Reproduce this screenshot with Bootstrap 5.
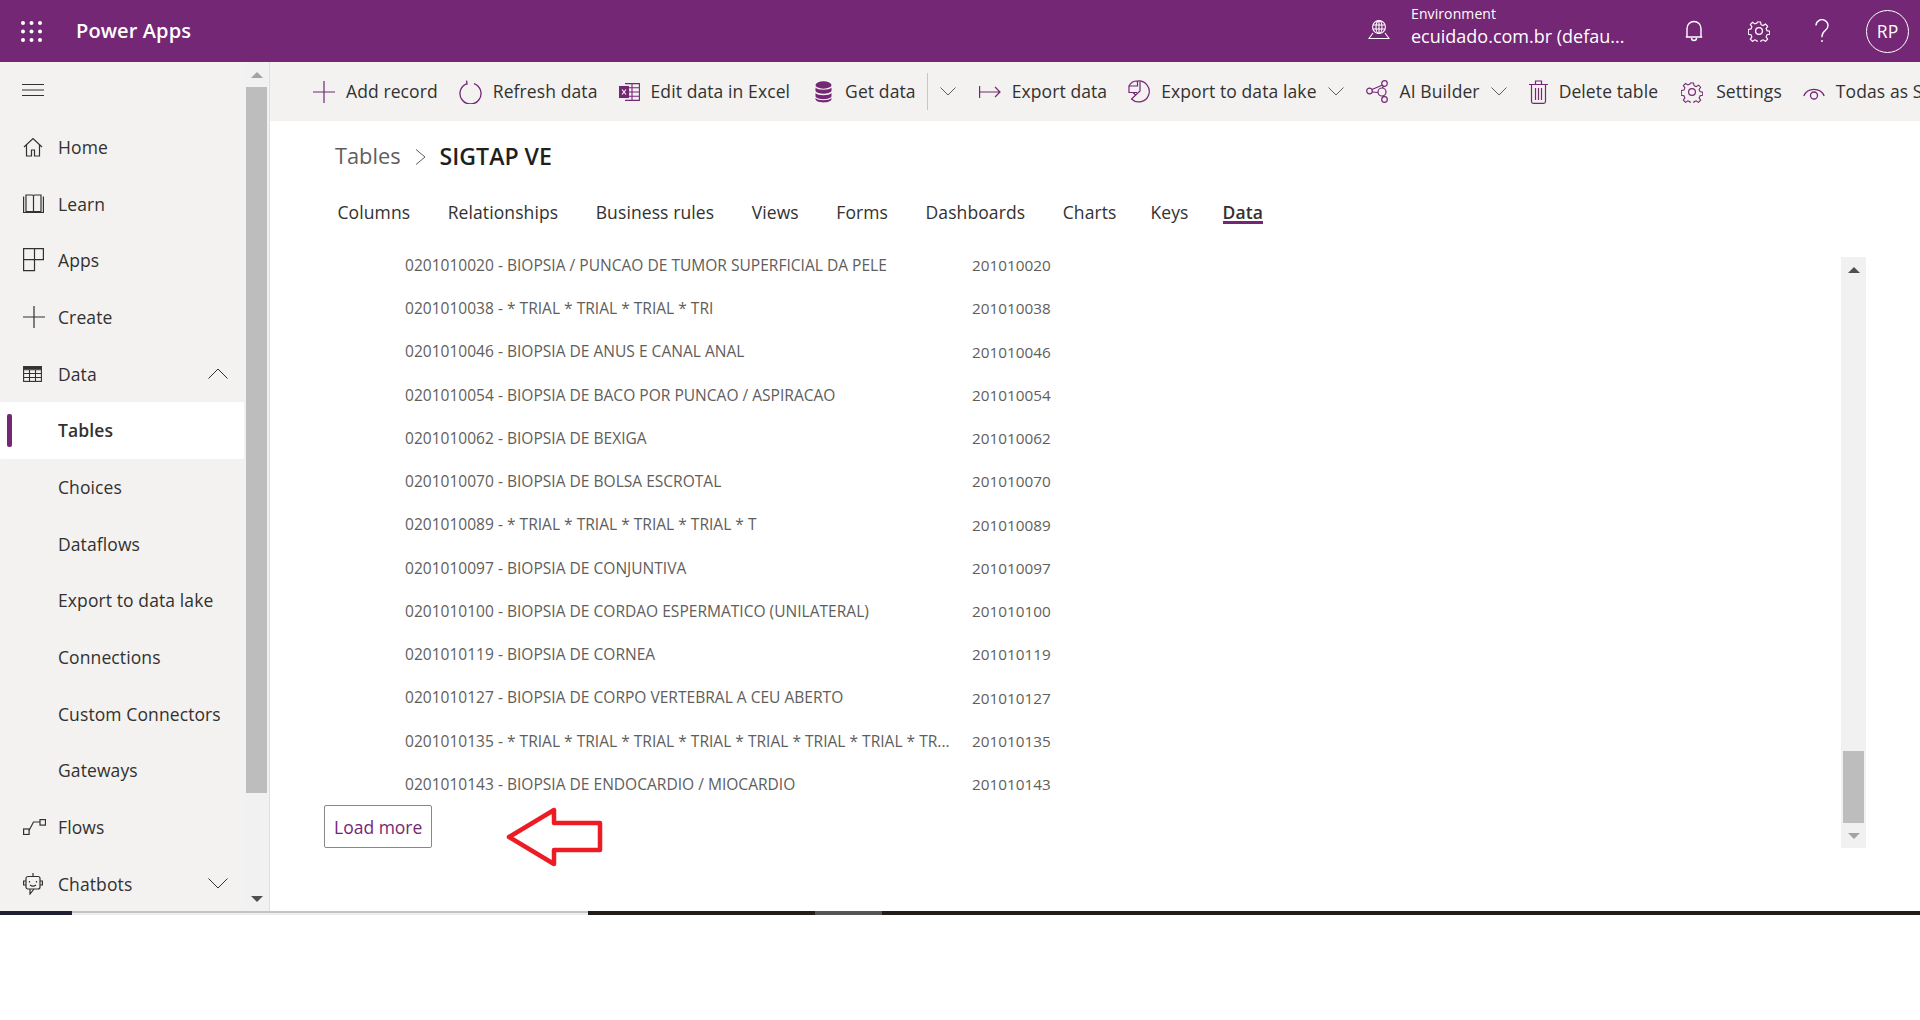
<!DOCTYPE html>
<html lang="en">
<head>
    <meta charset="UTF-8">
    <meta name="viewport" content="width=device-width, initial-scale=1.0">
    <title>Power Apps</title>
    <link href="https://cdn.jsdelivr.net/npm/bootstrap@5.3.0/dist/css/bootstrap.min.css" rel="stylesheet">
    <style>
        body {
            background: #fff;
            font-family: "Open Sans", "Noto Sans", sans-serif;
            font-size: 17.5px;
            letter-spacing: 0.1px;
            color: #323130;
            overflow: hidden;
        }
        svg { display: block; flex: none; fill: none; }
        .app-frame { height: 1020px; position: relative; overflow: hidden; }

        .top-bar { height: 62px; background: #742774; color: #fff; }
        .waffle { margin-left: 21px; }
        .brand { margin-left: 34px; font-size: 20px; font-weight: 600; }
        .env-icon { margin-left: auto; margin-bottom: 2px; }
        .env-text { margin-left: 21px; width: 271.5px; line-height: 1; margin-bottom: 10px; }
        .env-label { font-size: 14px; margin-bottom: 6px; }
        .env-name { font-size: 18px; letter-spacing: 0; }
        .top-btn { width: 22px; margin-right: 41px; }
        .bell-btn { margin-right: 43.5px; }
        .avatar { width: 43px; height: 43px; border: 1px solid #fff; border-radius: 50%; font-size: 17.5px; letter-spacing: 0; margin-right: 11px; margin-left: -8px; }

        .work-area { height: 849px; }
        .side-col { width: 270px; background: #f3f2f1; border-right: 1px solid #e1dfdd; overflow: hidden; }
        .side-nav { width: 246px; }
        .side-link { flex: none; height: 56.7px; padding-left: 22px; color: #323130; text-decoration: none; position: relative; white-space: nowrap; }
        .side-ico { width: 36px; }
        .side-ico svg { margin-left: 1px; }
        .side-sub { padding-left: 58px; }
        .side-sel { width: 244px; background: #fff; font-weight: 600; border-radius: 2px; }
        .side-sel::before { content: ""; position: absolute; left: 7px; top: 12px; height: 33px; width: 5px; border-radius: 2px; background: #742774; }
        .side-caret { margin-left: auto; margin-right: 18px; }

        .sb-track { width: 22px; background: #f1f1f1; }
        .sb-tri { height: 25px; }
        .tri-up, .tri-down { width: 0; height: 0; border-left: 6px solid transparent; border-right: 6px solid transparent; }
        .tri-up { border-bottom: 6px solid #a3a3a3; }
        .tri-down { border-top: 6px solid #505050; }
        .sb-thumb { background: #bdbdbd; }
        .thumb-side { height: 706px; margin-right: 1px; margin-bottom: auto; }
        .thumb-data { height: 72px; margin: auto 2px 0; }

        .cmd-bar { height: 59px; background: #f3f2f1; white-space: nowrap; overflow: hidden; padding-left: 43px; }
        .cmd-item { flex: none; gap: 11px; margin-right: 21px; }
        .cmd-item.gap-wide { gap: 13px; }
        .cmd-item.space-wide { margin-right: 23px; }
        .cmd-item.space-wider { margin-right: 25px; }
        .cmd-chev { margin-left: -10px; margin-right: 22px; }
        .cmd-split { margin-right: 23px; margin-left: 0; }
        .cmd-sep { flex: none; width: 1px; height: 37px; background: #c8c6c4; margin-left: -10px; margin-right: 12px; }

        .crumbs { height: 71px; padding-left: 65px; letter-spacing: 0; }
        .crumb-root { color: #605e5c; font-size: 21.8px; }
        .crumb-sep { margin: 0 14px; }
        .crumb-leaf { font-weight: 600; color: #201f1e; font-size: 23.1px; }
        .tab-strip { height: 41px; padding-left: 67.5px; gap: 37.5px; }
        .tab-item { position: relative; color: #323130; text-decoration: none; }
        .tab-tight { margin-left: -3.5px; }
        .tab-on { font-weight: 600; }
        .tab-on::after { content: ""; position: absolute; left: 0; right: 0; top: 22px; height: 3px; background: #742774; }

        .data-wrap { margin-top: 11px; }
        .data-main { width: 1571px; }
        .data-row { height: 43.25px; padding-left: 135px; font-size: 15.55px; letter-spacing: 0; color: #605e5c; }
        .data-name { flex: none; width: 560px; margin-right: 7px; white-space: nowrap; }
        .data-code { font-size: 15.3px; }
        .load-btn { display: block; margin: -1px 0 0 54px; height: 43px; padding: 0 9px; background: #fff; border: 1px solid #8a8886; border-radius: 2px; color: #742774; }
        .data-scroll { width: 25px; height: 591px; margin-top: 13px; }
        .data-scroll .tri-up { border-bottom-color: #505050; }
        .data-scroll .tri-down { border-top-color: #a3a3a3; }

        .strip { height: 4px; }
        .seg-navy { width: 72px; background: #1f2033; }
        .seg-grey { width: 516px; background: linear-gradient(#c4c4c4 50%, #efefef 50%); }
        .seg-dark { width: 227px; background: #221d18; }
        .seg-mid { width: 67px; background: #555; }
        .seg-rest { flex: 1 1 auto; background: #221d18; }

        .red-arrow { position: absolute; left: 504px; top: 805px; }
    </style>
</head>
<body>
<div class="app-frame">
    <header class="top-bar d-flex align-items-center">
        <svg class="waffle" width="21" height="21" viewBox="0 0 21 21">
            <g fill="#fff"><circle cx="2" cy="2" r="2"/><circle cx="10.5" cy="2" r="2"/><circle cx="19" cy="2" r="2"/><circle cx="2" cy="10.5" r="2"/><circle cx="10.5" cy="10.5" r="2"/><circle cx="19" cy="10.5" r="2"/><circle cx="2" cy="19" r="2"/><circle cx="10.5" cy="19" r="2"/><circle cx="19" cy="19" r="2"/></g>
        </svg>
        <div class="brand">Power Apps</div>
        <svg class="env-icon" width="22" height="20" viewBox="0 0 22 20" stroke="#fff" stroke-width="1.1">
            <circle cx="11" cy="7" r="6.4"/><ellipse cx="11" cy="7" rx="3" ry="6.4"/><path d="M4.8 5h12.4M4.8 9h12.4M11 .6v12.8M5 13l-4 5.5h20l-4-5.5"/>
        </svg>
        <div class="env-text">
            <div class="env-label">Environment</div>
            <div class="env-name">ecuidado.com.br (defau...</div>
        </div>
        <svg class="top-btn bell-btn" width="22" height="22" viewBox="0 0 22 22" stroke="#fff" stroke-width="1.4">
            <path d="M4 17V8.5a7 7 0 0 1 14 0V17zM2.8 17h16.400M8.500 18a2.500 2.500 0 0 0 5 0"/>
        </svg>
        <svg class="top-btn" width="22" height="22" viewBox="0 0 22 22" stroke="#fff" stroke-width="1.3">
            <circle cx="11" cy="11" r="3.400"/><path d="M9.300 1h3.400l.6 3 2.300 1 2.600-1.700 2.400 2.400-1.700 2.600 1 2.300 3 .6v3.400l-3 .6-1 2.300 1.700 2.600-2.400 2.400-2.600-1.700-2.300 1-.6 3H9.300l-.6-3-2.300-1-2.600 1.700-2.400-2.400 1.700-2.600-1-2.300-3-.6V9.300l3-.6 1-2.300L1.400 3.800 3.800 1.400l2.600 1.700 2.300-1z" transform="translate(1.100 1.100) scale(.9)"/>
        </svg>
        <svg class="top-btn" width="22" height="24" viewBox="0 0 22 24" stroke="#fff" stroke-width="1.400">
            <path d="M5 6.500a6 5.800 0 1 1 9.500 4.700c-2 1.500-3.500 2.800-3.500 6v1"/><path d="M11 21v2"/>
        </svg>
        <div class="avatar d-flex align-items-center justify-content-center">RP</div>
    </header>

    <div class="work-area d-flex">
        <aside class="side-col d-flex flex-shrink-0">
            <nav class="side-nav d-flex flex-column flex-shrink-0">
                <a class="side-link d-flex align-items-center" href="#">
                    <svg width="22" height="12" viewBox="0 0 22 12" stroke="#323130"><path d="M0 .5h22M0 6h22M0 11.500h22"/></svg>
                </a>
                <a class="side-link d-flex align-items-center" href="#">
                    <span class="side-ico"><svg width="20" height="20" viewBox="0 0 20 20" stroke="#323130" stroke-width="1.200"><path d="M1 10l9-8.500 9 8.500M3.500 8v11h5v-6h3v6h5V8"/></svg></span>Home
                </a>
                <a class="side-link d-flex align-items-center" href="#">
                    <span class="side-ico"><svg width="21" height="20" viewBox="0 0 21 20" stroke="#323130" stroke-width="1.200"><path d="M.6 2.500v16h19.800v-16M3 1h6.500c.6 0 1 .5 1 1v15.500H3zM18 1h-6.500c-.6 0-1 .5-1 1v15.500H18z"/></svg></span>Learn
                </a>
                <a class="side-link d-flex align-items-center" href="#">
                    <span class="side-ico"><svg width="21" height="24" viewBox="0 0 21 24" stroke="#323130" stroke-width="1.200"><path d="M.6.6h19.800v11H11.500v11H.6zM.6 11.600h10.900M11.500.6v11"/></svg></span>Apps
                </a>
                <a class="side-link d-flex align-items-center" href="#">
                    <span class="side-ico"><svg width="22" height="24" viewBox="0 0 22 24" stroke="#323130" stroke-width="1.200"><path d="M0 12h22M11 1v22"/></svg></span>Create
                </a>
                <a class="side-link d-flex align-items-center" href="#">
                    <span class="side-ico"><svg width="19" height="16" viewBox="0 0 19 16" stroke="#323130" stroke-width="1.100"><rect x=".6" y=".6" width="17.800" height="14.800"/><path d="M.6 3.800h17.800M.6 7.500h17.800M.6 11.500h17.800M6.500 3.800v11.600M12.500 3.800v11.600" /><path d="M.6 2h17.800" stroke-width="2.400"/></svg></span>Data
                    <svg class="side-caret" width="20" height="11" viewBox="0 0 20 11" stroke="#323130"><path d="M.5 10.500L10 1l9.500 9.500"/></svg>
                </a>
                <a class="side-link side-sub side-sel d-flex align-items-center" href="#">Tables</a>
                <a class="side-link side-sub d-flex align-items-center" href="#">Choices</a>
                <a class="side-link side-sub d-flex align-items-center" href="#">Dataflows</a>
                <a class="side-link side-sub d-flex align-items-center" href="#">Export to data lake</a>
                <a class="side-link side-sub d-flex align-items-center" href="#">Connections</a>
                <a class="side-link side-sub d-flex align-items-center" href="#">Custom Connectors</a>
                <a class="side-link side-sub d-flex align-items-center" href="#">Gateways</a>
                <a class="side-link d-flex align-items-center" href="#">
                    <span class="side-ico"><svg width="23" height="16" viewBox="0 0 23 16" stroke="#323130" stroke-width="1.200"><rect x=".6" y="10" width="5.500" height="5.500"/><rect x="17" y=".6" width="5.500" height="5.500"/><path d="M6 11.500L10.500 3H17"/></svg></span>Flows
                </a>
                <a class="side-link d-flex align-items-center" href="#">
                    <span class="side-ico"><svg width="20" height="22" viewBox="0 0 20 22" stroke="#323130" stroke-width="1.200"><path d="M10 0v3"/><rect x="3" y="3.500" width="14" height="12.500" rx="2"/><path d="M3 8H.6v4H3M17 8h2.400v4H17M7 16v5l4-5"/><path d="M6.500 8v1.500M13.500 8v1.500M7 12c2 1.600 4 1.600 6 0"/></svg></span>Chatbots
                    <svg class="side-caret" width="20" height="11" viewBox="0 0 20 11" stroke="#323130"><path d="M.5.5L10 10 19.500.5"/></svg>
                </a>
            </nav>
            <div class="sb-track d-flex flex-column">
                <div class="sb-tri d-flex align-items-center justify-content-center"><span class="tri-up"></span></div>
                <div class="sb-thumb thumb-side"></div>
                <div class="sb-tri d-flex align-items-center justify-content-center"><span class="tri-down"></span></div>
            </div>
        </aside>

        <main class="flex-grow-1 overflow-hidden">
            <div class="cmd-bar d-flex align-items-center">
                <div class="cmd-item d-flex align-items-center">
                    <svg width="22" height="24" viewBox="0 0 22 24" stroke="#742774" stroke-width="1.200"><path d="M0 12h22M11 1v22"/></svg><span>Add record</span>
                </div>
                <div class="cmd-item d-flex align-items-center">
                    <svg width="23" height="24" viewBox="0 0 23 24" stroke="#742774" stroke-width="1.300"><path d="M8 3.600a10.500 10.500 0 1 0 7 0M7.500 .6L8 4l-3.200 1"/></svg><span>Refresh data</span>
                </div>
                <div class="cmd-item space-wider d-flex align-items-center">
                    <svg width="21" height="18" viewBox="0 0 21 18" stroke="#742774" stroke-width="1.100"><path d="M6 .6h14.400v16.800H6M6 4.800h14.400M6 9h14.400M6 13.200h14.400M13 .6v16.800"/><rect x=".5" y="3.500" width="9" height="11" fill="#742774"/><path d="M3 6.500l4 5M7 6.500l-4 5" stroke="#fff"/></svg><span>Edit data in Excel</span>
                </div>
                <div class="cmd-item gap-wide d-flex align-items-center">
                    <svg width="17" height="22" viewBox="0 0 17 22"><ellipse cx="8.500" cy="4" rx="8" ry="3.700" fill="#742774"/><path d="M.5 6.500c2 3 14 3 16 0v3.500c-2 3.500-14 3.500-16 0zM.5 12c2 3 14 3 16 0v3.500c-2 3.500-14 3.500-16 0zM.5 17c2 3 14 3 16 0v1c0 4.500-16 4.500-16 0z" fill="#742774"/></svg><span>Get data</span>
                </div>
                <div class="cmd-sep"></div>
                <svg class="cmd-chev cmd-split" width="16" height="9" viewBox="0 0 16 9" stroke="#605e5c"><path d="M.5.5L8 8 15.500.5"/></svg>
                <div class="cmd-item d-flex align-items-center">
                    <svg width="22" height="12" viewBox="0 0 22 12" stroke="#742774" stroke-width="1.200"><path d="M.6 0v12M.6 6h20.400M16 1l5 5-5 5"/></svg><span>Export data</span>
                </div>
                <div class="cmd-item d-flex align-items-center">
                    <svg width="22" height="23" viewBox="0 0 22 23" stroke="#742774" stroke-width="1.200"><path d="M9.500 1a10.500 10.500 0 1 1-6 18L12 11V1M1 6h8.500V1A9 9 0 0 0 1 6zM1 6.500v6h8M5 12.500l3 3"/></svg><span>Export to data lake</span>
                </div>
                <svg class="cmd-chev" width="16" height="9" viewBox="0 0 16 9" stroke="#605e5c"><path d="M.5.5L8 8 15.500.5"/></svg>
                <div class="cmd-item d-flex align-items-center">
                    <svg width="23" height="23" viewBox="0 0 23 23" stroke="#742774" stroke-width="1.200"><circle cx="3.500" cy="11" r="2.800"/><circle cx="18.500" cy="3.500" r="2.800"/><circle cx="16" cy="12" r="4"/><circle cx="18.500" cy="19.500" r="2.800"/><path d="M6 9.500l10.500-4.500M6 12l6 .5M17.500 6l-1 2M17 15.800l1 1"/></svg><span>AI Builder</span>
                </div>
                <svg class="cmd-chev" width="16" height="9" viewBox="0 0 16 9" stroke="#605e5c"><path d="M.5.5L8 8 15.500.5"/></svg>
                <div class="cmd-item space-wide d-flex align-items-center">
                    <svg width="19" height="24" viewBox="0 0 19 24" stroke="#742774" stroke-width="1.200"><path d="M0 4.500h19M2.500 4.500v17c0 1 .8 1.800 1.800 1.800h10.400c1 0 1.800-.8 1.800-1.800v-17M6.500 4.500V1h6v3.500M6.500 8v12M9.500 8v12M12.500 8v12"/></svg><span>Delete table</span>
                </div>
                <div class="cmd-item gap-wide d-flex align-items-center">
                    <svg width="22" height="22" viewBox="0 0 22 22" stroke="#742774" stroke-width="1.200"><circle cx="11" cy="11" r="3.400"/><path d="M9.300 1h3.400l.6 3 2.300 1 2.600-1.700 2.400 2.400-1.700 2.600 1 2.300 3 .6v3.400l-3 .6-1 2.300 1.700 2.600-2.400 2.400-2.600-1.700-2.300 1-.6 3H9.300l-.6-3-2.300-1-2.600 1.700-2.400-2.400 1.700-2.600-1-2.300-3-.6V9.300l3-.6 1-2.300L1.400 3.800 3.800 1.400l2.600 1.700 2.300-1z" transform="translate(1.100 1.100) scale(.9)"/></svg><span>Settings</span>
                </div>
                <div class="cmd-item d-flex align-items-center">
                    <svg width="22" height="16" viewBox="0 0 22 16" stroke="#742774" stroke-width="1.300"><path d="M.8 12a11 10.500 0 0 1 20.400 0"/><circle cx="11" cy="11.500" r="3.500"/></svg><span>Todas as S</span>
                </div>
            </div>

            <div class="crumbs d-flex align-items-center">
                <span class="crumb-root">Tables</span>
                <svg class="crumb-sep" width="11" height="16" viewBox="0 0 11 16" stroke="#605e5c"><path d="M1 .5L10 8l-9 7.500"/></svg>
                <span class="crumb-leaf">SIGTAP VE</span>
            </div>

            <div class="tab-strip d-flex align-items-center">
                <a class="tab-item" href="#">Columns</a>
                <a class="tab-item" href="#">Relationships</a>
                <a class="tab-item" href="#">Business rules</a>
                <a class="tab-item" href="#">Views</a>
                <a class="tab-item" href="#">Forms</a>
                <a class="tab-item" href="#">Dashboards</a>
                <a class="tab-item" href="#">Charts</a>
                <a class="tab-item tab-tight" href="#">Keys</a>
                <a class="tab-item tab-tight tab-on" href="#">Data</a>
            </div>

            <div class="data-wrap d-flex">
                <div class="data-main flex-shrink-0">
                    <div id="rows"></div>
                    <button class="load-btn" type="button">Load more</button>
                </div>
                <div class="data-scroll sb-track d-flex flex-column flex-shrink-0">
                    <div class="sb-tri d-flex align-items-center justify-content-center"><span class="tri-up"></span></div>
                    <div class="sb-thumb thumb-data"></div>
                    <div class="sb-tri d-flex align-items-center justify-content-center"><span class="tri-down"></span></div>
                </div>
            </div>
        </main>
    </div>

    <div class="strip d-flex">
        <div class="seg-navy"></div>
        <div class="seg-grey"></div>
        <div class="seg-dark"></div>
        <div class="seg-mid"></div>
        <div class="seg-rest"></div>
    </div>

    <svg class="red-arrow" width="102" height="64" viewBox="0 0 102 64" stroke="#ed1c24" stroke-width="4.500" stroke-linejoin="round">
        <path d="M5 32L50 5v13h46v27H50v14z" fill="#fff"/>
    </svg>
</div>

<script>
    // rows of the data grid
    const rows = [
        ['0201010020 - BIOPSIA / PUNCAO DE TUMOR SUPERFICIAL DA PELE', '201010020'],
        ['0201010038 - * TRIAL * TRIAL * TRIAL * TRI', '201010038'],
        ['0201010046 - BIOPSIA DE ANUS E CANAL ANAL', '201010046'],
        ['0201010054 - BIOPSIA DE BACO POR PUNCAO / ASPIRACAO', '201010054'],
        ['0201010062 - BIOPSIA DE BEXIGA', '201010062'],
        ['0201010070 - BIOPSIA DE BOLSA ESCROTAL', '201010070'],
        ['0201010089 - * TRIAL * TRIAL * TRIAL * TRIAL * T', '201010089'],
        ['0201010097 - BIOPSIA DE CONJUNTIVA', '201010097'],
        ['0201010100 - BIOPSIA DE CORDAO ESPERMATICO (UNILATERAL)', '201010100'],
        ['0201010119 - BIOPSIA DE CORNEA', '201010119'],
        ['0201010127 - BIOPSIA DE CORPO VERTEBRAL A CEU ABERTO', '201010127'],
        ['0201010135 - * TRIAL * TRIAL * TRIAL * TRIAL * TRIAL * TRIAL * TRIAL * TR...', '201010135'],
        ['0201010143 - BIOPSIA DE ENDOCARDIO / MIOCARDIO', '201010143']
    ];
    document.getElementById('rows').innerHTML = rows.map(r => `
        <div class="data-row d-flex align-items-center">
            <div class="data-name">${r[0]}</div>
            <div class="data-code">${r[1]}</div>
        </div>`).join('');
</script>
<script src="https://cdn.jsdelivr.net/npm/bootstrap@5.3.0/dist/js/bootstrap.bundle.min.js"></script>
</body>
</html>
